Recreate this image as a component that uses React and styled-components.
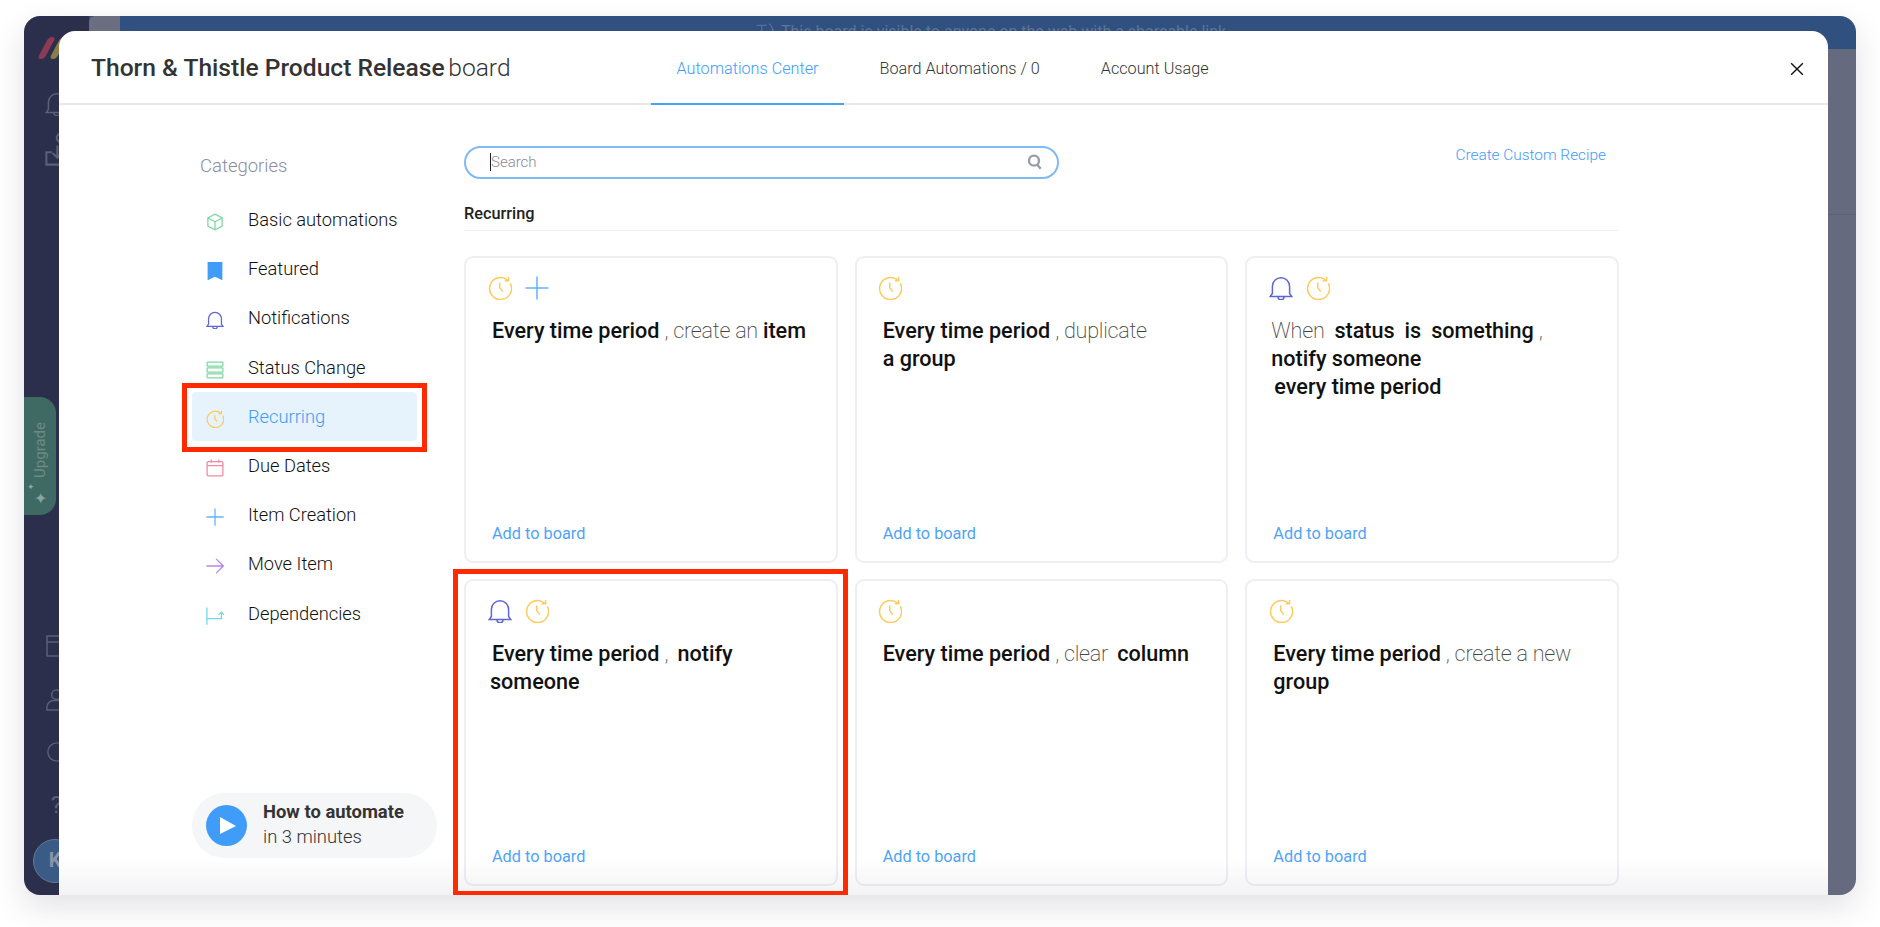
import React from 'react';
import styled, { createGlobalStyle } from 'styled-components';

const GlobalStyle = createGlobalStyle`
  html, body {
    margin: 0;
    background: #fff;
    font-family: Roboto, "Liberation Sans", sans-serif;
  }
  #root {
    width: 1880px;
    height: 927px;
    overflow: hidden;
  }
`;

const YELLOW = '#fdcb5a';
const BLUE = '#3f9cf9';
const PURPLE = '#5d66d6';
const SKY = '#62b5fb';

const drawings = {
  clock: (
    <>
      <path d="M22.3 7.4A11 11 0 1 1 19.4 3.9" />
      <path d="M20.6 .9V4.7H16.8" />
      <path d="M11.7 6.6V11.6L14.8 15.6" />
    </>
  ),
  plus: <path d="M12 .5V23.5M.5 12H23.5" />,
  bell: (
    <>
      <path d="M1.2 20.6H22.8L20.6 17.4V10.4A8.6 8.6 0 0 0 3.4 10.4V17.4Z" />
      <path d="M9 20.8A3 3 0 0 0 15 20.8" />
    </>
  ),
  cube: (
    <>
      <path d="M12 1.5L21.5 6.6V17.4L12 22.5L2.5 17.4V6.6Z" />
      <path d="M2.5 6.6L12 11.8L21.5 6.6M12 11.8V22.5" />
    </>
  ),
  bookmark: <path d="M3 1H21V23L12 18.5L3 23Z" fill="currentColor" />,
  status: (
    <>
      <rect x="1.5" y="1.5" width="21" height="5.4" rx=".8" />
      <rect x="1.5" y="9.3" width="21" height="5.4" rx=".8" />
      <rect x="1.5" y="17.1" width="21" height="5.4" rx=".8" />
    </>
  ),
  calendar: (
    <>
      <rect x="1.5" y="3.5" width="21" height="19" rx="1.5" />
      <path d="M1.5 8.8H22.5M7 .8V5M17 .8V5" />
    </>
  ),
  arrow: <path d="M.5 12H23M13.5 2.5L23 12L13.5 21.5" />,
  dependency: (
    <>
      <path d="M1.2 .5V23.5M1.2 15.5H20.5V7.5" />
      <path d="M16.8 10.5L20.5 6.8L24 10.5" />
    </>
  ),
  search: (
    <>
      <circle cx="10.5" cy="10" r="7.5" />
      <path d="M15.5 16L20.5 22" />
    </>
  ),
  close: <path d="M2 2L22 22M22 2L2 22" />,
  person: (
    <>
      <circle cx="12" cy="7" r="5" />
      <path d="M2 23V20A7 7 0 0 1 9 13H15A7 7 0 0 1 22 20V23Z" />
    </>
  ),
  inbox: (
    <>
      <circle cx="11.5" cy="3.5" r="3" />
      <path d="M9 9V18M5.5 14.5L9 18L12.5 14.5M5 14H1V23H20" />
    </>
  ),
  board: <path d="M2 2H22V22H2ZM2 8H22" />,
  ring: <circle cx="12" cy="12" r="10" />,
  signal: <path d="M2 4H14M8 4V22M17 2A10 10 0 0 1 17 18M20 6A6 6 0 0 1 20 14" />,
};

function Icon({ name, color, size = 24, weight = 1.5 }) {
  return (
    <Glyph viewBox="0 0 24 24" $size={size} $color={color} $weight={weight} aria-hidden="true">
      {drawings[name]}
    </Glyph>
  );
}

const categories = [
  { label: 'Basic automations', icon: 'cube', color: '#7fd8a3' },
  { label: 'Featured', icon: 'bookmark', color: BLUE },
  { label: 'Notifications', icon: 'bell', color: PURPLE },
  { label: 'Status Change', icon: 'status', color: '#7fd8a3' },
  { label: 'Recurring', icon: 'clock', color: YELLOW, active: true },
  { label: 'Due Dates', icon: 'calendar', color: '#f38aa2' },
  { label: 'Item Creation', icon: 'plus', color: SKY },
  { label: 'Move Item', icon: 'arrow', color: '#b685ea' },
  { label: 'Dependencies', icon: 'dependency', color: '#72d6ee' },
];

// each line is a list of [text, bold]; spaces are kept as written
const recipes = [
  {
    icons: ['clock', 'plus'],
    lines: [{ indent: 2, parts: [['Every time period', 1], [' , create an '], ['item', 1]] }],
  },
  {
    icons: ['clock'],
    lines: [
      { indent: 2, parts: [['Every time period', 1], [' , duplicate']] },
      { indent: 2, parts: [['a group', 1]] },
    ],
  },
  {
    icons: ['bell', 'clock'],
    lines: [
      { indent: 0, parts: [['When  '], ['status', 1], ['  '], ['is', 1], ['  '], ['something', 1], [' ,']] },
      { indent: 0, parts: [['notify someone', 1]] },
      { indent: 3, parts: [['every time period', 1]] },
    ],
  },
  {
    icons: ['bell', 'clock'],
    framed: true,
    lines: [
      { indent: 2, parts: [['Every time period', 1], [' , \u2009'], ['notify', 1]] },
      { indent: 0, parts: [['someone', 1]] },
    ],
  },
  {
    icons: ['clock'],
    lines: [{ indent: 2, parts: [['Every time period', 1], [' , clear \u2009'], ['column', 1]] }],
  },
  {
    icons: ['clock'],
    lines: [
      { indent: 2, parts: [['Every time period', 1], [' , create a new']] },
      { indent: 2, parts: [['group', 1]] },
    ],
  },
];

const iconColor = { clock: YELLOW, plus: SKY, bell: PURPLE };

export default function App() {
  return (
    <>
      <GlobalStyle />
      <Page>
        <Window>
          <Rail>
            <Logo>
              <LogoBar $color="#8c3a55" />
              <LogoBar $color="#8a7d47" />
            </Logo>
            <RailIcon><Icon name="bell" color="#5c5f78" /></RailIcon>
            <RailTall><Icon name="inbox" color="#5c5f78" size={33} /></RailTall>
            <Upgrade>
              <UpgradeText>Upgrade</UpgradeText>
              <Sparkles>
                <SmallSpark>✦</SmallSpark>
                <BigSpark>✦</BigSpark>
              </Sparkles>
            </Upgrade>
            <RailBottom>
              <Icon name="board" color="#5c5f78" />
              <Icon name="person" color="#5c5f78" size={23} />
              <Icon name="ring" color="#5c5f78" size={22} />
              <HelpMark>?</HelpMark>
              <Avatar>K</Avatar>
            </RailBottom>
          </Rail>
          <Main>
            <TopBar>
              <TopBarTab />
              <Notice>
                <Icon name="signal" color="#587097" size={20} />
                This board is visible to anyone on the web with a shareable link
              </Notice>
            </TopBar>
            <BackdropHead />
            <Backdrop />
          </Main>

          <Modal>
            <Header>
              <Title>
                <strong>Thorn &amp; Thistle Product Release</strong> board
              </Title>
              <Tabs>
                <Tab $active>Automations Center</Tab>
                <Tab>Board Automations / 0</Tab>
                <Tab>Account Usage</Tab>
              </Tabs>
              <CloseButton aria-label="Close">
                <Icon name="close" color="#111" size={14} weight={2.4} />
              </CloseButton>
            </Header>
            <Body>
              <Sidebar>
                <SidebarTitle>Categories</SidebarTitle>
                {categories.map((c) => (
                  <MenuItem key={c.label} $active={c.active}>
                    <MenuIcon><Icon name={c.icon} color={c.color} size={18} weight={1.7} /></MenuIcon>
                    {c.label}
                    {c.active && <RedFrame $top={-9} $right={-10} $bottom={-11} $left={-10} />}
                  </MenuItem>
                ))}
                <VideoPill>
                  <PlayCircle>
                    <svg width="18" height="18" viewBox="0 0 18 18" aria-hidden="true">
                      <path d="M1 0L17 9L1 17Z" fill="#fff" />
                    </svg>
                  </PlayCircle>
                  <VideoText>
                    <b>How to automate</b>
                    <span>in 3 minutes</span>
                  </VideoText>
                </VideoPill>
              </Sidebar>
              <Content>
                <SearchRow>
                  <SearchBox>
                    <Caret />
                    <SearchHint>Search</SearchHint>
                    <Icon name="search" color="#9b9ca8" size={16} weight={3.6} />
                  </SearchBox>
                  <CustomLink>Create Custom Recipe</CustomLink>
                </SearchRow>
                <SectionTitle>Recurring</SectionTitle>
                <CardGrid>
                  {recipes.map((r, i) => (
                    <Card key={i}>
                      <CardIcons>
                        {r.icons.map((name) => (
                          <Icon key={name} name={name} color={iconColor[name]} />
                        ))}
                      </CardIcons>
                      <Sentence>
                        {r.lines.map((line, n) => (
                          <SentenceLine key={n} $indent={line.indent}>
                            {line.parts.map(([text, bold], k) =>
                              bold ? <Strong key={k}>{text}</Strong> : <Thin key={k}>{text}</Thin>
                            )}
                          </SentenceLine>
                        ))}
                      </Sentence>
                      <AddLink>Add to board</AddLink>
                      {r.framed && <RedFrame $top={-12} $right={-12.5} $bottom={-12} $left={-13} />}
                    </Card>
                  ))}
                </CardGrid>
              </Content>
            </Body>
          </Modal>
        </Window>
      </Page>
    </>
  );
}

const Page = styled.div`
  padding: 16px 24px 32px;
`;

const Window = styled.div`
  position: relative;
  display: flex;
  height: 879px;
  border-radius: 16px;
  overflow: hidden;
  box-shadow: 0 12px 32px rgba(30, 30, 60, 0.13);
`;

const Glyph = styled.svg`
  flex: none;
  display: block;
  width: ${(p) => p.$size}px;
  height: ${(p) => p.$size}px;
  color: ${(p) => p.$color};
  fill: none;
  stroke: currentColor;
  stroke-width: ${(p) => p.$weight};
`;

const Rail = styled.aside`
  width: 65px;
  flex: none;
  display: flex;
  flex-direction: column;
  background: #2c2f4b;
`;

const Logo = styled.div`
  display: flex;
  gap: 5px;
  height: 18px;
  margin: 21px 0 0 19px;
`;

const LogoBar = styled.span`
  width: 7px;
  height: 22px;
  border-radius: 4px;
  background: ${(p) => p.$color};
  transform: skewX(-28deg);
`;

const RailIcon = styled.div`
  margin: 37px 0 0 21px;
`;

const RailTall = styled.div`
  margin: 17px 0 0 21px;
`;

const Upgrade = styled.div`
  width: 32px;
  height: 118px;
  margin-top: 231px;
  box-sizing: border-box;
  padding-top: 25px;
  display: flex;
  flex-direction: column;
  align-items: center;
  gap: 6px;
  background: #3e6a63;
  border-radius: 0 16px 16px 0;
  color: #6f8b86;
`;

const UpgradeText = styled.span`
  writing-mode: vertical-rl;
  transform: rotate(180deg);
  font-size: 15px;
  line-height: 16px;
`;

const Sparkles = styled.div`
  display: flex;
  flex-direction: column;
  color: #8ca39f;
`;

const SmallSpark = styled.span`
  margin-left: -7px;
  font-size: 9px;
  line-height: 7px;
`;

const BigSpark = styled.span`
  font-size: 16px;
  line-height: 16px;
`;

const RailBottom = styled.div`
  margin-top: 119px;
  display: flex;
  flex-direction: column;
  align-items: center;
  gap: 30px;
`;

const HelpMark = styled.span`
  font-size: 24px;
  line-height: 24px;
  color: #5c5f78;
`;

const Avatar = styled.div`
  width: 44px;
  height: 44px;
  box-sizing: border-box;
  margin: -8px 0 0 -3px;
  border-radius: 50%;
  border: 1.5px solid #5f7a9e;
  background: #3b5b87;
  color: #8b93a5;
  font-size: 20px;
  font-weight: 700;
  line-height: 41px;
  text-align: center;
`;

const Main = styled.main`
  flex: 1;
  display: flex;
  flex-direction: column;
`;

const TopBar = styled.div`
  height: 33px;
  flex: none;
  display: flex;
  background: #30507f;
  overflow: hidden;
`;

const TopBarTab = styled.div`
  width: 31px;
  height: 33px;
  border-radius: 6px 0 0 0;
  background: #6b6d80;
`;

const Notice = styled.div`
  display: flex;
  align-items: flex-start;
  gap: 6px;
  margin: 6px 0 0 635px;
  color: #5d7499;
  font-size: 16px;
  line-height: 19px;
  white-space: nowrap;
`;

const BackdropHead = styled.div`
  height: 165px;
  flex: none;
  background: #656a7f;
  border-bottom: 1px solid #5d6277;
`;

const Backdrop = styled.div`
  flex: 1;
  background: #656a7f;
`;

const Modal = styled.section`
  position: absolute;
  top: 15px;
  bottom: 0;
  left: 35px;
  width: 1769px;
  display: flex;
  flex-direction: column;
  background: #fff;
  border-radius: 16px 16px 0 0;
  overflow: hidden;

  &::after {
    content: '';
    position: absolute;
    left: 0;
    right: 0;
    bottom: 0;
    height: 36px;
    background: linear-gradient(rgba(40, 40, 70, 0), rgba(40, 40, 70, 0.06));
    pointer-events: none;
  }
`;

const Header = styled.header`
  height: 72px;
  flex: none;
  display: flex;
  align-items: stretch;
  padding: 0 24px 0 32px;
  border-bottom: 2px solid #e8e8ec;
`;

const Title = styled.h1`
  margin: 2px 0 0;
  align-self: center;
  font-size: 24.6px;
  font-weight: 300;
  line-height: 30px;
  color: #333;
  white-space: pre;

  strong {
    margin-right: -2.4px;
    font-weight: 500;
  }
`;

const Tabs = styled.nav`
  display: flex;
  gap: 9px;
  margin-left: 140px;
  margin-bottom: -2px;
`;

const Tab = styled.a`
  display: flex;
  align-items: center;
  padding: 3px 26px 0;
  font-size: 16.2px;
  font-weight: 300;
  color: ${(p) => (p.$active ? '#3f9cf9' : '#333')};
  border-bottom: 2px solid ${(p) => (p.$active ? '#4aa2f9' : 'transparent')};
`;

const CloseButton = styled.button`
  margin-left: auto;
  align-self: center;
  padding: 0;
  border: 0;
  background: none;
  margin-top: 3px;
`;

const Body = styled.div`
  flex: 1;
  display: flex;
  min-height: 0;
  padding-left: 133px;
`;

const Sidebar = styled.div`
  width: 272px;
  flex: none;
  display: flex;
  flex-direction: column;
  padding-bottom: 37px;
  box-sizing: border-box;
`;

const SidebarTitle = styled.h2`
  margin: 51px 0 0 8px;
  height: 39px;
  font-size: 18.5px;
  font-weight: 300;
  line-height: 20px;
  color: #8b8da3;
`;

const MenuItem = styled.div`
  position: relative;
  width: 225px;
  height: 49.2px;
  display: flex;
  align-items: center;
  gap: 24px;
  padding-left: 14px;
  box-sizing: border-box;
  font-size: 18.3px;
  font-weight: 300;
  color: ${(p) => (p.$active ? '#3f9cf9' : '#111')};
  background: ${(p) => (p.$active ? '#e6f3fd' : 'transparent')};
  border-radius: 4px;
`;

const MenuIcon = styled.span`
  margin-top: 5px;
`;

const RedFrame = styled.span`
  position: absolute;
  top: ${(p) => p.$top}px;
  right: ${(p) => p.$right}px;
  bottom: ${(p) => p.$bottom}px;
  left: ${(p) => p.$left}px;
  border: 5px solid #ff2a00;
  z-index: 2;
`;

const VideoPill = styled.div`
  width: 245px;
  height: 65px;
  margin-top: auto;
  display: flex;
  align-items: center;
  gap: 16px;
  padding-left: 14px;
  box-sizing: border-box;
  background: #f5f6f8;
  border-radius: 33px;
`;

const PlayCircle = styled.div`
  width: 41px;
  height: 41px;
  flex: none;
  display: flex;
  align-items: center;
  justify-content: center;
  padding-left: 3px;
  box-sizing: border-box;
  border-radius: 50%;
  background: #3f9cf9;
`;

const VideoText = styled.div`
  display: flex;
  flex-direction: column;
  margin-top: -4px;
  color: #333;
  font-size: 18.4px;
  line-height: 25px;

  b {
    font-weight: 700;
  }

  span {
    font-weight: 300;
  }
`;

const Content = styled.div`
  width: 1155px;
  padding-top: 41px;
`;

const SearchRow = styled.div`
  display: flex;
  justify-content: space-between;
  padding-right: 13px;
`;

const SearchBox = styled.div`
  width: 595px;
  height: 33px;
  box-sizing: border-box;
  display: flex;
  align-items: center;
  padding: 0 14px 2px 24px;
  border: 2px solid #7fb9f6;
  border-radius: 17px;
`;

const Caret = styled.span`
  width: 1px;
  height: 18px;
  background: #222;
`;

const SearchHint = styled.span`
  flex: 1;
  font-size: 15px;
  font-weight: 300;
  color: #8a8a95;
`;

const CustomLink = styled.a`
  font-size: 15.4px;
  font-weight: 300;
  line-height: 18px;
  color: #3f9cf9;
`;

const SectionTitle = styled.h3`
  margin: 26px 0 25px;
  padding-bottom: 7px;
  font-size: 16.3px;
  font-weight: 500;
  line-height: 18px;
  color: #222;
  border-bottom: 1.5px solid #f0f0f3;
`;

const CardGrid = styled.div`
  display: grid;
  grid-template-columns: repeat(3, 1fr);
  grid-auto-rows: 307px;
  column-gap: 17px;
  row-gap: 15.5px;
`;

const Card = styled.article`
  position: relative;
  display: flex;
  flex-direction: column;
  box-sizing: border-box;
  padding: 18px 24px 18px 24px;
  background: #fff;
  border: 2px solid #eeeef5;
  border-radius: 9px;
`;

const CardIcons = styled.div`
  display: flex;
  gap: 13px;
  margin-left: -2.5px;
`;

const Sentence = styled.div`
  margin-top: 17px;
  font-size: 21.6px;
  line-height: 28px;
  color: #111;
  white-space: pre;
`;

const SentenceLine = styled.div`
  padding-left: ${(p) => p.$indent}px;
`;

const Strong = styled.span`
  font-weight: 500;
`;

const Thin = styled.span`
  font-weight: 200;
  letter-spacing: -0.25px;
  color: #444;
`;

const AddLink = styled.a`
  margin-top: auto;
  padding-left: 2px;
  font-size: 16.3px;
  font-weight: 400;
  line-height: 18px;
  color: #4fa3f7;
`;
